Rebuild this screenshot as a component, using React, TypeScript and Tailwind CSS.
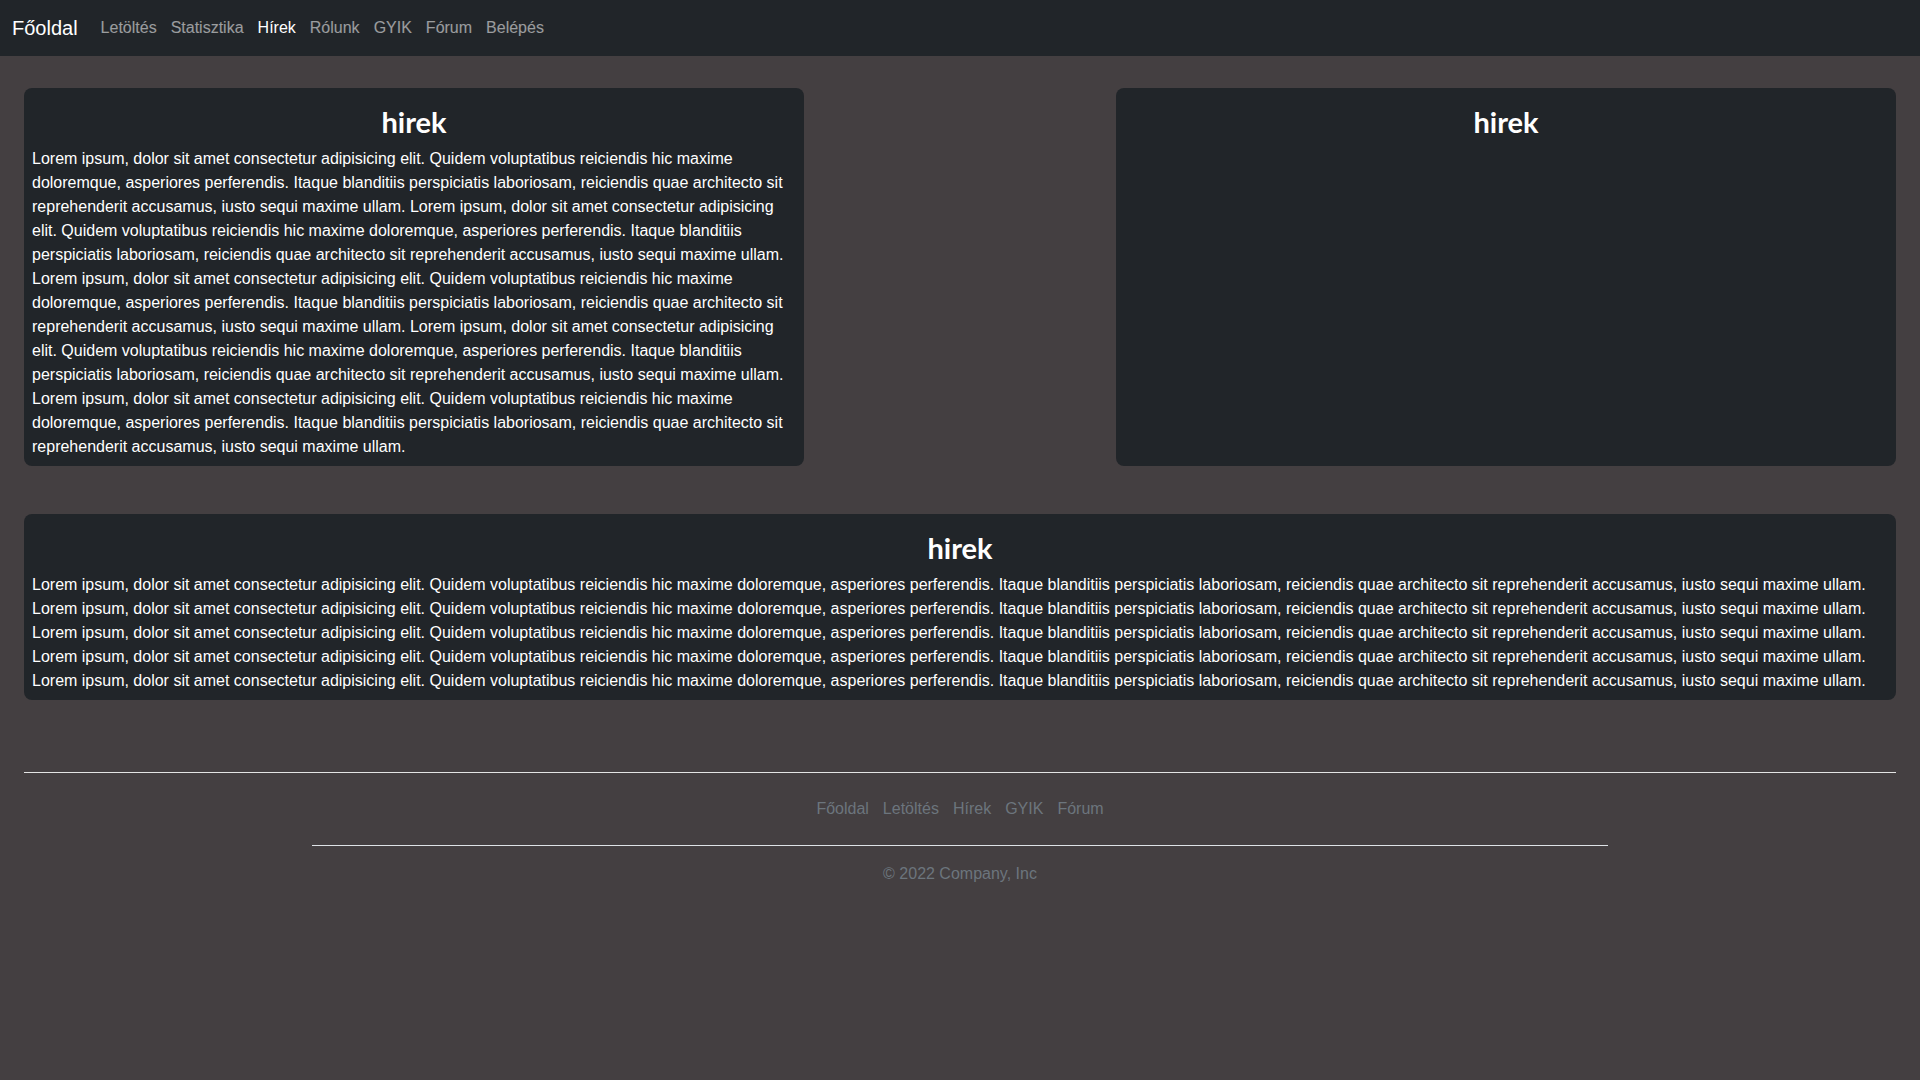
const LOREM =
  "Lorem ipsum, dolor sit amet consectetur adipisicing elit. Quidem voluptatibus reiciendis hic maxime doloremque, asperiores perferendis. Itaque blanditiis perspiciatis laboriosam, reiciendis quae architecto sit reprehenderit accusamus, iusto sequi maxime ullam.";

const navLinks = [
  { label: "Letöltés" },
  { label: "Statisztika" },
  { label: "Hírek", active: true },
  { label: "Rólunk" },
  { label: "GYIK" },
  { label: "Fórum" },
  { label: "Belépés" },
];

const footerLinks = ["Főoldal", "Letöltés", "Hírek", "GYIK", "Fórum"];

function Card({ title, children, className = "" }: { title: string; children?: React.ReactNode; className?: string }) {
  return (
    <div className={`rounded-lg bg-[#212529] px-2 pt-[17px] pb-[7px] text-white ${className}`}>
      <h2 className="mb-[9px] text-center font-['Lato',sans-serif] text-[29px] leading-[33px] font-bold">{title}</h2>
      {children && <p className="text-base leading-6">{children}</p>}
    </div>
  );
}

export default function App() {
  const repeat = (n: number) => Array.from({ length: n }, () => LOREM).join(" ");

  return (
    <div className="min-h-screen bg-[#443f41] font-['Liberation_Sans',Arial,sans-serif]">
      {/* Top navbar */}
      <nav className="flex h-14 items-center bg-[#212529] px-3">
        <a href="#" className="mr-4 text-xl text-white">
          Főoldal
        </a>
        <ul className="flex">
          {navLinks.map((l) => (
            <li key={l.label}>
              <a href="#" className={`block px-[7px] py-2 text-base leading-6 ${l.active ? "text-white" : "text-white/55"}`}>
                {l.label}
              </a>
            </li>
          ))}
        </ul>
      </nav>

      <main className="px-6 pt-8">
        <div className="grid grid-cols-12">
          <Card title="hirek" className="col-span-5">
            {repeat(5)}
          </Card>
          <Card title="hirek" className="col-span-5 col-start-8" />
        </div>

        <Card title="hirek" className="mt-12">
          {repeat(5)}
        </Card>

        <div className="mt-[72px] h-px bg-[#e4e4e4]" />
      </main>

      <footer className="mx-auto max-w-[1320px] px-3 pt-4">
        <ul className="mb-4 flex justify-center border-b border-[#dee2e6] pb-4">
          {footerLinks.map((l) => (
            <li key={l}>
              <a href="#" className="block px-[7px] py-2 text-base leading-6 text-[#6c757d]">
                {l}
              </a>
            </li>
          ))}
        </ul>
        <p className="text-center text-base leading-6 text-[#6c757d]">© 2022 Company, Inc</p>
      </footer>
    </div>
  );
}
